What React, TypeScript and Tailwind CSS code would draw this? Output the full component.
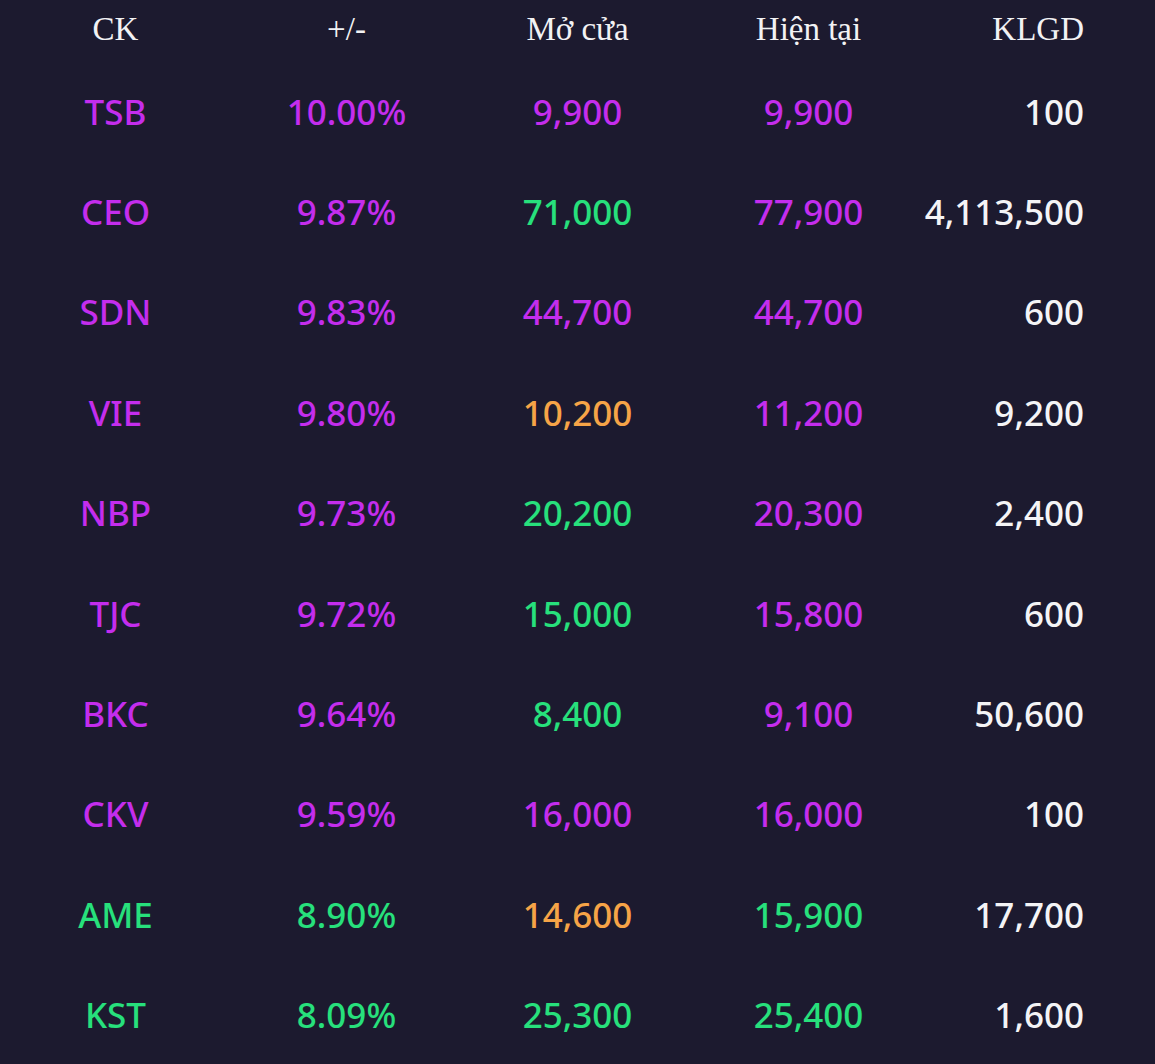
import React from "react";

const P = "text-[#c42ded]";
const G = "text-[#27e07c]";
const O = "text-[#f6a447]";
const W = "text-[#f4f4f6]";

type Row = [string, string, string, string, string, string, string, string];

const rows: Row[] = [
  ["TSB", "10.00%", "9,900", "9,900", "100", P, P, P],
  ["CEO", "9.87%", "71,000", "77,900", "4,113,500", P, G, P],
  ["SDN", "9.83%", "44,700", "44,700", "600", P, P, P],
  ["VIE", "9.80%", "10,200", "11,200", "9,200", P, O, P],
  ["NBP", "9.73%", "20,200", "20,300", "2,400", P, G, P],
  ["TJC", "9.72%", "15,000", "15,800", "600", P, G, P],
  ["BKC", "9.64%", "8,400", "9,100", "50,600", P, G, P],
  ["CKV", "9.59%", "16,000", "16,000", "100", P, P, P],
  ["AME", "8.90%", "14,600", "15,900", "17,700", G, O, G],
  ["KST", "8.09%", "25,300", "25,400", "1,600", G, G, G],
];

export default function App() {
  return (
    <div className="w-[1155px] h-[1064px] overflow-hidden bg-[#1c1a2f]">
      <div
        className="grid grid-cols-5 h-[61px] items-center pb-[1px] text-[33px] text-[#f2f2f4]"
        style={{ fontFamily: '"Liberation Serif", serif' }}
      >
        <div className="text-center">CK</div>
        <div className="text-center">+/-</div>
        <div className="text-center">Mở cửa</div>
        <div className="text-center">Hiện tại</div>
        <div className="text-right pr-[71px]">KLGD</div>
      </div>
      {rows.map((r) => (
        <div
          key={r[0]}
          className="grid grid-cols-5 h-[100.4px] items-center text-[35px] leading-none font-medium"
          style={{ fontFamily: '"Noto Sans", sans-serif' }}
        >
          <div className={`text-center ${r[5]}`}>{r[0]}</div>
          <div className={`text-center ${r[5]}`}>{r[1]}</div>
          <div className={`text-center ${r[6]}`}>{r[2]}</div>
          <div className={`text-center ${r[7]}`}>{r[3]}</div>
          <div className={`text-right pr-[71px] ${W}`}>{r[4]}</div>
        </div>
      ))}
    </div>
  );
}
